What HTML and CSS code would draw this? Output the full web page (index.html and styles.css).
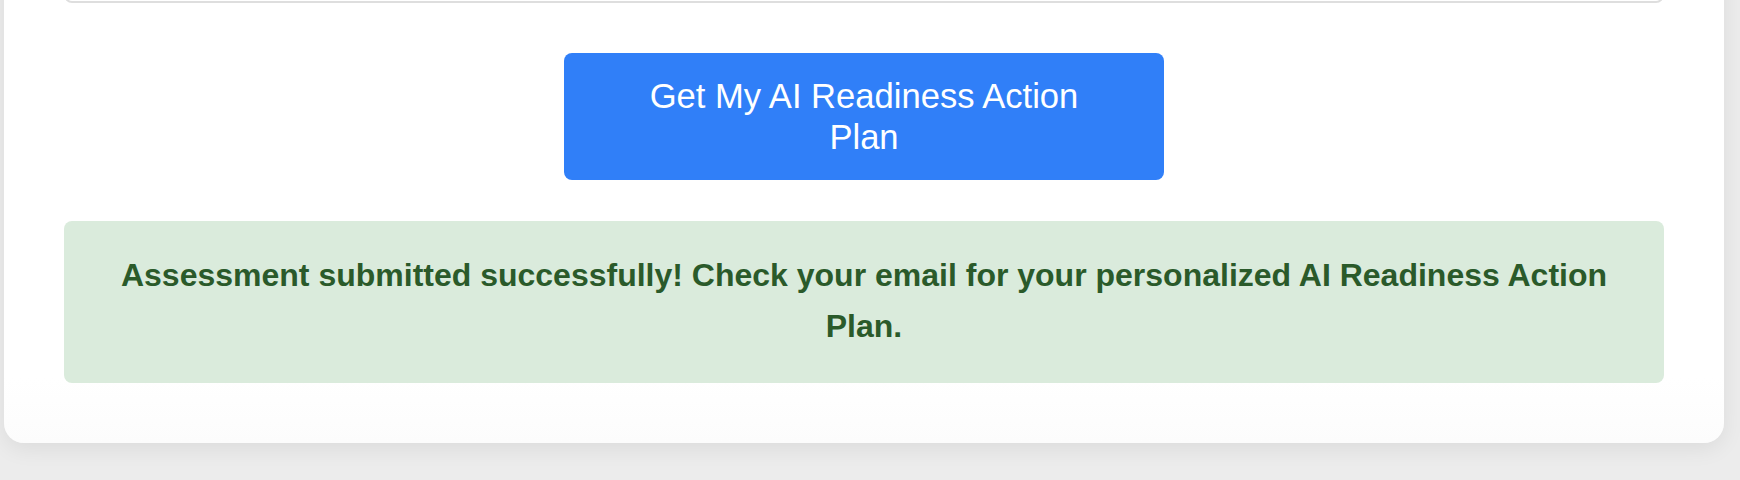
FILE: index.html
```html
<!DOCTYPE html>
<html lang="en">
<head>
<meta charset="utf-8">
<title>AI Readiness Assessment</title>
<link rel="stylesheet" href="styles.css">
</head>
<body>
  <main class="card">
    <form class="form" onsubmit="return false;">
      <div class="field">
        <textarea class="input" aria-label="Additional comments"></textarea>
      </div>
      <div class="actions">
        <button type="submit" class="submit">Get My AI Readiness Action Plan</button>
      </div>
      <div class="message">
        Assessment submitted successfully! Check your email for your personalized AI Readiness Action Plan.
      </div>
    </form>
  </main>
</body>
</html>
```

FILE: styles.css
```css
html, body {
  margin: 0;
  padding: 0;
}

body {
  background: #ececec;
  font-family: "Liberation Sans", Arial, Helvetica, sans-serif;
  height: 480px;
  overflow: hidden;
}

.card {
  box-sizing: border-box;
  width: 1720px;
  margin: -100px 0 0 4px;
  padding: 60px 60px 60px;
  background: linear-gradient(to bottom, #ffffff 0%, #ffffff 88%, #fcfcfc 100%);
  border-radius: 20px;
  box-shadow: 0 6px 22px rgba(0, 0, 0, 0.07);
}

.form {
  display: flex;
  flex-direction: column;
}

.field {
  display: flex;
}

.input {
  box-sizing: border-box;
  width: 100%;
  height: 43px;
  border: 2px solid #dedede;
  border-radius: 8px;
  resize: none;
  background: #fff;
  font: inherit;
}

.actions {
  display: flex;
  justify-content: center;
  margin-top: 50px;
}

.submit {
  box-sizing: border-box;
  width: 600px;
  height: 127px;
  padding: 0 60px;
  border: none;
  border-radius: 8px;
  background: #307ff8;
  color: #ffffff;
  font-family: "Liberation Sans", Arial, Helvetica, sans-serif;
  font-size: 34.6px;
  line-height: 41px;
  text-align: center;
  cursor: pointer;
}

.message {
  margin-top: 41px;
  height: 162px;
  box-sizing: border-box;
  padding: 29px 30px;
  border-radius: 8px;
  background: #daebdc;
  color: #2a5a2a;
  font-size: 32px;
  font-weight: bold;
  line-height: 1.6;
  text-align: center;
}
```
